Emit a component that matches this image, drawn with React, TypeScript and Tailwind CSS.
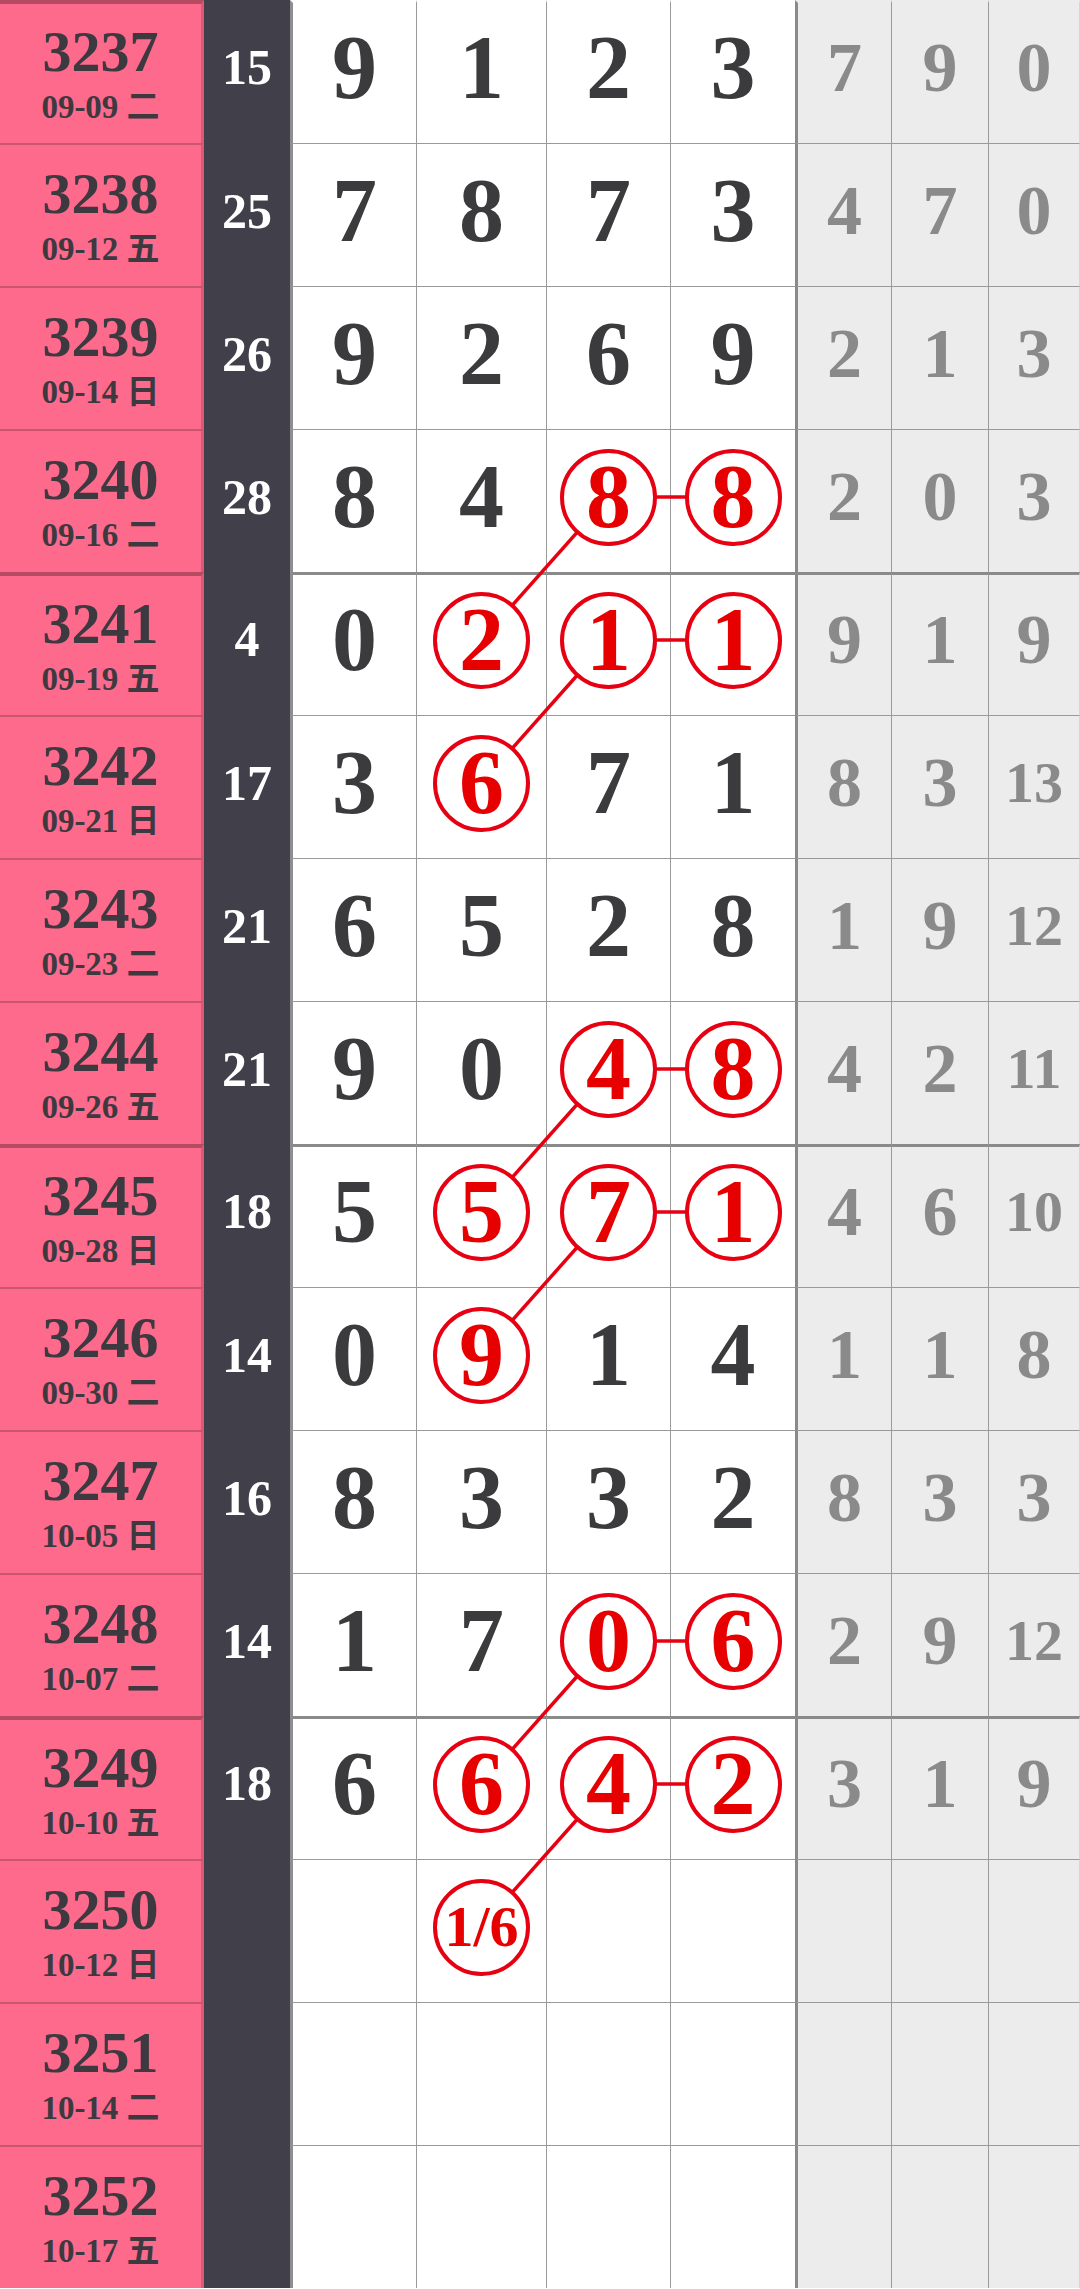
import React from 'react'

type Row = {
  id: string
  date: string
  sum?: string
  nums: string[]
  gray: string[]
  circles?: number[]
}

const rows: Row[] = [
  { id: '3237', date: '09-09 二', sum: '15', nums: ['9', '1', '2', '3'], gray: ['7', '9', '0'] },
  { id: '3238', date: '09-12 五', sum: '25', nums: ['7', '8', '7', '3'], gray: ['4', '7', '0'] },
  { id: '3239', date: '09-14 日', sum: '26', nums: ['9', '2', '6', '9'], gray: ['2', '1', '3'] },
  { id: '3240', date: '09-16 二', sum: '28', nums: ['8', '4', '8', '8'], gray: ['2', '0', '3'], circles: [2, 3] },
  { id: '3241', date: '09-19 五', sum: '4', nums: ['0', '2', '1', '1'], gray: ['9', '1', '9'], circles: [1, 2, 3] },
  { id: '3242', date: '09-21 日', sum: '17', nums: ['3', '6', '7', '1'], gray: ['8', '3', '13'], circles: [1] },
  { id: '3243', date: '09-23 二', sum: '21', nums: ['6', '5', '2', '8'], gray: ['1', '9', '12'] },
  { id: '3244', date: '09-26 五', sum: '21', nums: ['9', '0', '4', '8'], gray: ['4', '2', '11'], circles: [2, 3] },
  { id: '3245', date: '09-28 日', sum: '18', nums: ['5', '5', '7', '1'], gray: ['4', '6', '10'], circles: [1, 2, 3] },
  { id: '3246', date: '09-30 二', sum: '14', nums: ['0', '9', '1', '4'], gray: ['1', '1', '8'], circles: [1] },
  { id: '3247', date: '10-05 日', sum: '16', nums: ['8', '3', '3', '2'], gray: ['8', '3', '3'] },
  { id: '3248', date: '10-07 二', sum: '14', nums: ['1', '7', '0', '6'], gray: ['2', '9', '12'], circles: [2, 3] },
  { id: '3249', date: '10-10 五', sum: '18', nums: ['6', '6', '4', '2'], gray: ['3', '1', '9'], circles: [1, 2, 3] },
  { id: '3250', date: '10-12 日', nums: ['', '1/6', '', ''], gray: ['', '', ''], circles: [1] },
  { id: '3251', date: '10-14 二', nums: ['', '', '', ''], gray: ['', '', ''] },
  { id: '3252', date: '10-17 五', nums: ['', '', '', ''], gray: ['', '', ''] },
]

const ROW_H = 143
const CY = 68
const colX = [354.5, 481.5, 608.5, 733]

// [fromRow, fromCol, toRow, toCol]
const links: number[][] = [
  [3, 2, 3, 3],
  [3, 2, 4, 1],
  [4, 2, 4, 3],
  [4, 2, 5, 1],
  [7, 2, 7, 3],
  [7, 2, 8, 1],
  [8, 2, 8, 3],
  [8, 2, 9, 1],
  [11, 2, 11, 3],
  [11, 2, 12, 1],
  [12, 2, 12, 3],
  [12, 2, 13, 1],
]

const whiteW = ['w-[126px]', 'w-[130px]', 'w-[124px]', 'w-[125px]']
const grayW = ['w-[96px]', 'w-[97px]', 'w-[92px]']

function Circle({ value }: { value: string }) {
  const small = value.length > 1
  return (
    <div className="relative z-10 flex h-[97px] w-[97px] items-center justify-center rounded-full border-4 border-[#e60012] bg-white">
      <span className={`${small ? 'text-[58px]' : 'text-[90px]'} font-bold leading-none text-[#e60000]`}>
        {value}
      </span>
    </div>
  )
}

export default function App() {
  return (
    <div className="relative w-[1080px] overflow-hidden bg-white font-['Liberation_Serif','Noto_Sans_CJK_SC',serif]">
      {rows.map((row, i) => {
        const thick = i % 4 === 0
        const line =
          i === 0
            ? 'border-t-[3px] border-t-transparent'
            : thick
              ? 'border-t-[3px] border-t-[#8a8a8a]'
              : 'border-t border-t-[#9a9a9a]'
        const pad = thick ? 'pb-[10px]' : 'pb-[8px]'
        return (
          <div key={row.id} className="flex h-[143px]">
            {/* issue + date */}
            <div
              className={`flex w-[204px] flex-col items-center justify-center border-r-[3px] border-r-[#d85a78] bg-[#fd6a8b] text-[#3d3940] ${
                thick ? 'border-t-4 border-t-[#b54a63]' : 'border-t-2 border-t-[#c9566f]'
              }`}
            >
              <div className="text-[58px] font-bold leading-none">{row.id}</div>
              <div className="mt-[10px] text-[33px] font-bold leading-none">{row.date}</div>
            </div>

            {/* sum */}
            <div className={`flex w-[86px] items-center justify-center bg-[#403f4a] text-[50px] font-bold leading-none text-white ${pad}`}>
              {row.sum}
            </div>

            {/* numbers */}
            {row.nums.map((n, c) => (
              <div
                key={c}
                className={`flex items-center justify-center bg-white ${whiteW[c]} ${line} ${pad} ${
                  c === 0 ? 'border-l-[3px] border-l-[#8e8e8e]' : 'border-l border-l-[#9a9a9a]'
                }`}
              >
                {row.circles?.includes(c) ? (
                  <Circle value={n} />
                ) : (
                  <span className="text-[90px] font-bold leading-none text-[#3b3b3d]">{n}</span>
                )}
              </div>
            ))}

            {/* gray stats */}
            {row.gray.map((g, c) => (
              <div
                key={c}
                className={`flex items-center justify-center bg-[#ececec] ${grayW[c]} ${line} ${pad} ${
                  c === 0 ? 'border-l-[3px] border-l-[#8a8a8a]' : 'border-l border-l-[#9a9a9a]'
                } ${c === 2 ? 'border-r border-r-[#d6d6d6]' : ''}`}
              >
                <span className={`${g.length > 1 ? 'text-[58px]' : 'text-[70px]'} font-bold leading-none text-[#8a8a8a]`}>
                  {g}
                </span>
              </div>
            ))}
          </div>
        )
      })}

      <svg className="pointer-events-none absolute left-0 top-0" width="1080" height="2289">
        {links.map(([r1, c1, r2, c2], k) => (
          <line
            key={k}
            x1={colX[c1]}
            y1={r1 * ROW_H + CY}
            x2={colX[c2]}
            y2={r2 * ROW_H + CY}
            stroke="#e60012"
            strokeWidth={3.5}
          />
        ))}
      </svg>
    </div>
  )
}
